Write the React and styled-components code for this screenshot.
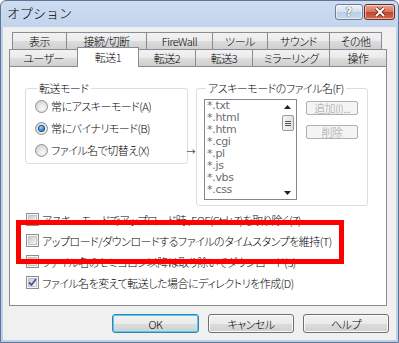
import styled, { createGlobalStyle, css } from "styled-components";

const GlobalStyle = createGlobalStyle`
  html, body {
    margin: 0;
    padding: 0;
    background: #ffffff;
  }
  * {
    box-sizing: border-box;
  }
`;

const uiFont = css`
  font-family: "Noto Sans CJK JP", "Noto Sans", sans-serif;
  font-size: 11px;
  font-weight: 300;
  letter-spacing: -0.5px;
  font-feature-settings: "palt";
  color: #000;
`;

const Window = styled.div`
  position: relative;
  width: 399px;
  height: 343px;
  display: flex;
  flex-direction: column;
  background: linear-gradient(#cddcf0, #bcd0ea 40px, #bcd0ea);
  border: 1px solid #5c7796;
  border-radius: 6px 6px 0 0;
  ${uiFont};
`;

const TitleBar = styled.div`
  height: 26px;
  display: flex;
  justify-content: space-between;
  align-items: flex-start;
  padding: 0 3px 0 6px;
`;

const TitleText = styled.div`
  font-size: 13px;
  line-height: 16px;
  letter-spacing: 0;
  padding-top: 4px;
  font-feature-settings: normal;
  color: #000;
`;

const CaptionButtons = styled.div`
  display: flex;
  gap: 1px;
  margin-top: 3px;
`;

const CaptionButton = styled.div`
  width: ${(p) => p.$w}px;
  height: 16px;
  border: 1px solid ${(p) => (p.$close ? "#6e2a20" : "#6d7d92")};
  border-radius: 3px;
  display: flex;
  align-items: center;
  justify-content: center;
  background: ${(p) =>
    p.$close
      ? "linear-gradient(#e8a593, #d47259 50%, #c2452c 51%, #d4684c)"
      : "linear-gradient(#eef3fa, #d3dfee 50%, #bccde4 51%, #cad9ec)"};
  box-shadow: inset 0 0 0 1px rgba(255, 255, 255, 0.5);
  font-family: "DejaVu Sans", sans-serif;
  font-weight: bold;
  font-size: 12px;
  letter-spacing: 0;
  color: #ffffff;
`;

const Client = styled.div`
  flex: 1;
  margin: 0 2px 2px 2px;
  background: #f0f0f0;
  display: flex;
  flex-direction: column;
  padding: 5px 7px 0 6px;
`;

const TabControl = styled.div`
  display: flex;
  flex-direction: column;
  width: 378px;
`;

const TabRow = styled.div`
  display: flex;
  align-items: flex-end;
  height: 17px;
  margin: ${(p) => (p.$back ? "0 5px 0 3px" : "0")};
`;

const Tab = styled.div`
  width: ${(p) => p.$w}px;
  height: 17px;
  flex-shrink: 0;
  border: 1px solid #898c95;
  border-bottom: none;
  background: linear-gradient(#f2f2f2, #ebebeb 50%, #dddddd 51%, #cfcfcf);
  display: flex;
  justify-content: center;
  align-items: center;
  line-height: 13px;
  white-space: nowrap;
  & + & {
    margin-left: -1px;
  }
  ${(p) =>
    p.$active &&
    css`
      position: relative;
      z-index: 1;
      height: 20px;
      margin-bottom: -1px;
      background: #ffffff;
      padding-bottom: 1px;
    `}
`;

const Panel = styled.div`
  height: 240px;
  border: 1px solid #898c95;
  background: #ffffff;
  padding: 14px 0 0 15px;
  display: flex;
  flex-direction: column;
`;

const GroupRow = styled.div`
  display: flex;
  align-items: flex-start;
`;

const Group = styled.fieldset`
  margin: 0;
  padding: 0 0 0 ${(p) => p.$pl}px;
  width: ${(p) => p.$w}px;
  height: ${(p) => p.$h}px;
  border: 1px solid #d5dfe5;
  border-radius: 3px;
  min-width: 0;
`;

const Legend = styled.legend`
  padding: 0 2px;
  margin-left: 2px;
  line-height: 14px;
  white-space: nowrap;
`;

const RadioRow = styled.div`
  display: flex;
  align-items: center;
  gap: 3px;
  height: 22px;
  white-space: nowrap;
`;

const RadioCircle = styled.span`
  width: 13px;
  height: 13px;
  border-radius: 50%;
  border: 1px solid #8e8f8f;
  background: radial-gradient(circle at 60% 65%, #fbfbfb, #d8d8d8 70%, #cfcfcf);
  display: flex;
  align-items: center;
  justify-content: center;
  flex-shrink: 0;
  &::after {
    content: "";
    display: ${(p) => (p.$on ? "block" : "none")};
    width: 5px;
    height: 5px;
    border-radius: 50%;
    background: radial-gradient(circle at 40% 35%, #9fdcff, #1c6cbf 70%, #0f3e7a);
    box-shadow: 0 0 0 1px #1a4e86;
  }
`;

const ArrowCell = styled.div`
  width: 8px;
  padding-top: 63px;
  line-height: 12px;
  overflow: visible;
  white-space: nowrap;
`;

const Arrow = styled.span`
  display: inline-block;
  margin-left: -2px;
  font-family: "DejaVu Sans", sans-serif;
  font-size: 11px;
  letter-spacing: 0;
`;

const ListArea = styled.div`
  display: flex;
  gap: 9px;
  padding-top: 4px;
`;

const ListBox = styled.div`
  width: 93px;
  height: 101px;
  border: 1px solid #828790;
  background: #ffffff;
  display: flex;
  overflow: hidden;
`;

const ListItems = styled.div`
  flex: 1;
  padding: 0 0 0 2px;
  color: #6d6d6d;
  line-height: 12px;
`;

const ListItem = styled.div`
  height: 12px;
  font-family: "DejaVu Sans", sans-serif;
  font-weight: normal;
  font-size: 11px;
  letter-spacing: -0.3px;
`;

const ScrollBar = styled.div`
  width: 17px;
  display: flex;
  flex-direction: column;
  align-items: center;
  padding: 5px 0 4px;
`;

const ScrollThumb = styled.div`
  width: 12px;
  height: 16px;
  margin-top: 6px;
  border: 1px solid #9a9a9a;
  border-radius: 2px;
  background: linear-gradient(90deg, #f6f6f6, #e2e2e2);
  display: flex;
  flex-direction: column;
  justify-content: center;
  align-items: center;
  gap: 1px;
  & > i {
    display: block;
    width: 6px;
    height: 1px;
    background: #555;
  }
`;

const ScrollSpacer = styled.div`
  flex: 1;
`;

const SideButtons = styled.div`
  display: flex;
  flex-direction: column;
  gap: 10px;
  padding-top: 2px;
`;

const SmallButton = styled.div`
  width: 52px;
  height: 14px;
  border: 1px solid #adb2b5;
  border-radius: 2px;
  background: #f4f4f4;
  color: #a0a0a0;
  line-height: 12px;
  text-align: center;
  white-space: nowrap;
`;

const CheckList = styled.div`
  margin-top: 3px;
  display: flex;
  flex-direction: column;
`;

const CheckRow = styled.div`
  display: flex;
  align-items: center;
  gap: 3px;
  height: 21px;
  padding-left: 1px;
  white-space: nowrap;
`;

const CheckBox = styled.span`
  width: 13px;
  height: 13px;
  flex-shrink: 0;
  border: 1px solid #8e8f8f;
  background: #f4f4f4;
  box-shadow: inset 0 0 0 1px #f4f4f4, inset 0 0 0 2px #c6c6c6;
  background-image: linear-gradient(135deg, #cbcbcb, #f5f5f5);
  background-size: 7px 7px;
  background-position: 2px 2px;
  background-repeat: no-repeat;
  display: flex;
  align-items: center;
  justify-content: center;
`;

const ButtonRow = styled.div`
  display: flex;
  justify-content: flex-end;
  gap: 9px;
  margin-top: 8px;
`;

const DialogButton = styled.div`
  width: ${(p) => p.$w}px;
  height: 19px;
  border: 1px solid ${(p) => (p.$default ? "#3c7fb1" : "#707070")};
  border-radius: 3px;
  background: linear-gradient(#f2f2f2, #ebebeb 50%, #dddddd 51%, #cfcfcf);
  box-shadow: ${(p) =>
    p.$default ? "inset 0 0 0 1px #48d0f5" : "inset 0 0 0 1px #fafafa"};
  display: flex;
  align-items: center;
  justify-content: center;
  line-height: 14px;
`;

const Highlight = styled.div`
  position: absolute;
  left: 15px;
  top: 219px;
  width: 328px;
  height: 44px;
  border: 5px solid #ff0000;
  pointer-events: none;
`;

const backTabs = [
  ["表示", 55],
  ["接続/切断", 81],
  ["FireWall", 67],
  ["ツール", 56],
  ["サウンド", 63],
  ["その他", 53],
];

const frontTabs = [
  ["ユーザー", 69],
  ["転送1", 62],
  ["転送2", 58],
  ["転送3", 58],
  ["ミラーリング", 78],
  ["操作", 58],
];

const radios = [
  ["常にアスキーモード(A)", false],
  ["常にバイナリモード(B)", true],
  ["ファイル名で切替え(X)", false],
];

const patterns = ["*.txt", "*.html", "*.htm", "*.cgi", "*.pl", "*.js", "*.vbs", "*.css"];

const checks = [
  ["アスキーモードでアップロード時、EOF(Ctrl+Z)を取り除く(Z)", false],
  ["アップロード/ダウンロードするファイルのタイムスタンプを維持(T)", false],
  ["ファイル名のセミコロン以降は取り除いてダウンロード(S)", false],
  ["ファイル名を変えて転送した場合にディレクトリを作成(D)", true],
];

function Check({ on }) {
  return (
    <CheckBox>
      {on && (
        <svg width="9" height="9" viewBox="0 0 9 9">
          <path d="M1 4.5 L3.5 7 L8 1" fill="none" stroke="#3c5a9a" strokeWidth="1.8" />
        </svg>
      )}
    </CheckBox>
  );
}

export default function App() {
  return (
    <>
      <GlobalStyle />
      <Window>
        <TitleBar>
          <TitleText>オプション</TitleText>
          <CaptionButtons>
            <CaptionButton $w={28}>
              <span style={{ color: "#fff", textShadow: "0 0 1px #34435a, 0 0 1px #34435a" }}>?</span>
            </CaptionButton>
            <CaptionButton $w={31} $close>
              <svg width="12" height="10" viewBox="0 0 12 10">
                <path d="M2 1 L10 9 M10 1 L2 9" stroke="#5a1a10" strokeWidth="3.4" />
                <path d="M2 1 L10 9 M10 1 L2 9" stroke="#ffffff" strokeWidth="2" />
              </svg>
            </CaptionButton>
          </CaptionButtons>
        </TitleBar>
        <Client>
          <TabControl>
            <TabRow $back>
              {backTabs.map(([label, w]) => (
                <Tab key={label} $w={w}>
                  {label}
                </Tab>
              ))}
            </TabRow>
            <TabRow>
              {frontTabs.map(([label, w]) => (
                <Tab key={label} $w={w} $active={label === "転送1"}>
                  {label}
                </Tab>
              ))}
            </TabRow>
            <Panel>
              <GroupRow>
                <Group $w={163} $h={83} $pl={9}>
                  <Legend>転送モード</Legend>
                  {radios.map(([label, on]) => (
                    <RadioRow key={label}>
                      <RadioCircle $on={on} />
                      {label}
                    </RadioRow>
                  ))}
                </Group>
                <ArrowCell>
                  <Arrow>→</Arrow>
                </ArrowCell>
                <Group $w={172} $h={125} $pl={7}>
                  <Legend>アスキーモードのファイル名(F)</Legend>
                  <ListArea>
                    <ListBox>
                      <ListItems>
                        {patterns.map((p) => (
                          <ListItem key={p}>{p}</ListItem>
                        ))}
                      </ListItems>
                      <ScrollBar>
                        <svg width="7" height="4" viewBox="0 0 7 4">
                          <path d="M0 4 L3.5 0 L7 4 Z" fill="#222" />
                        </svg>
                        <ScrollThumb>
                          <i />
                          <i />
                          <i />
                        </ScrollThumb>
                        <ScrollSpacer />
                        <svg width="7" height="4" viewBox="0 0 7 4">
                          <path d="M0 0 L7 0 L3.5 4 Z" fill="#222" />
                        </svg>
                      </ScrollBar>
                    </ListBox>
                    <SideButtons>
                      <SmallButton>追加(I)...</SmallButton>
                      <SmallButton>削除</SmallButton>
                    </SideButtons>
                  </ListArea>
                </Group>
              </GroupRow>
              <CheckList>
                {checks.map(([label, on]) => (
                  <CheckRow key={label}>
                    <Check on={on} />
                    {label}
                  </CheckRow>
                ))}
              </CheckList>
            </Panel>
          </TabControl>
          <ButtonRow>
            <DialogButton $w={87} $default>
              OK
            </DialogButton>
            <DialogButton $w={86}>キャンセル</DialogButton>
            <DialogButton $w={86}>ヘルプ</DialogButton>
          </ButtonRow>
        </Client>
        <Highlight />
      </Window>
    </>
  );
}
